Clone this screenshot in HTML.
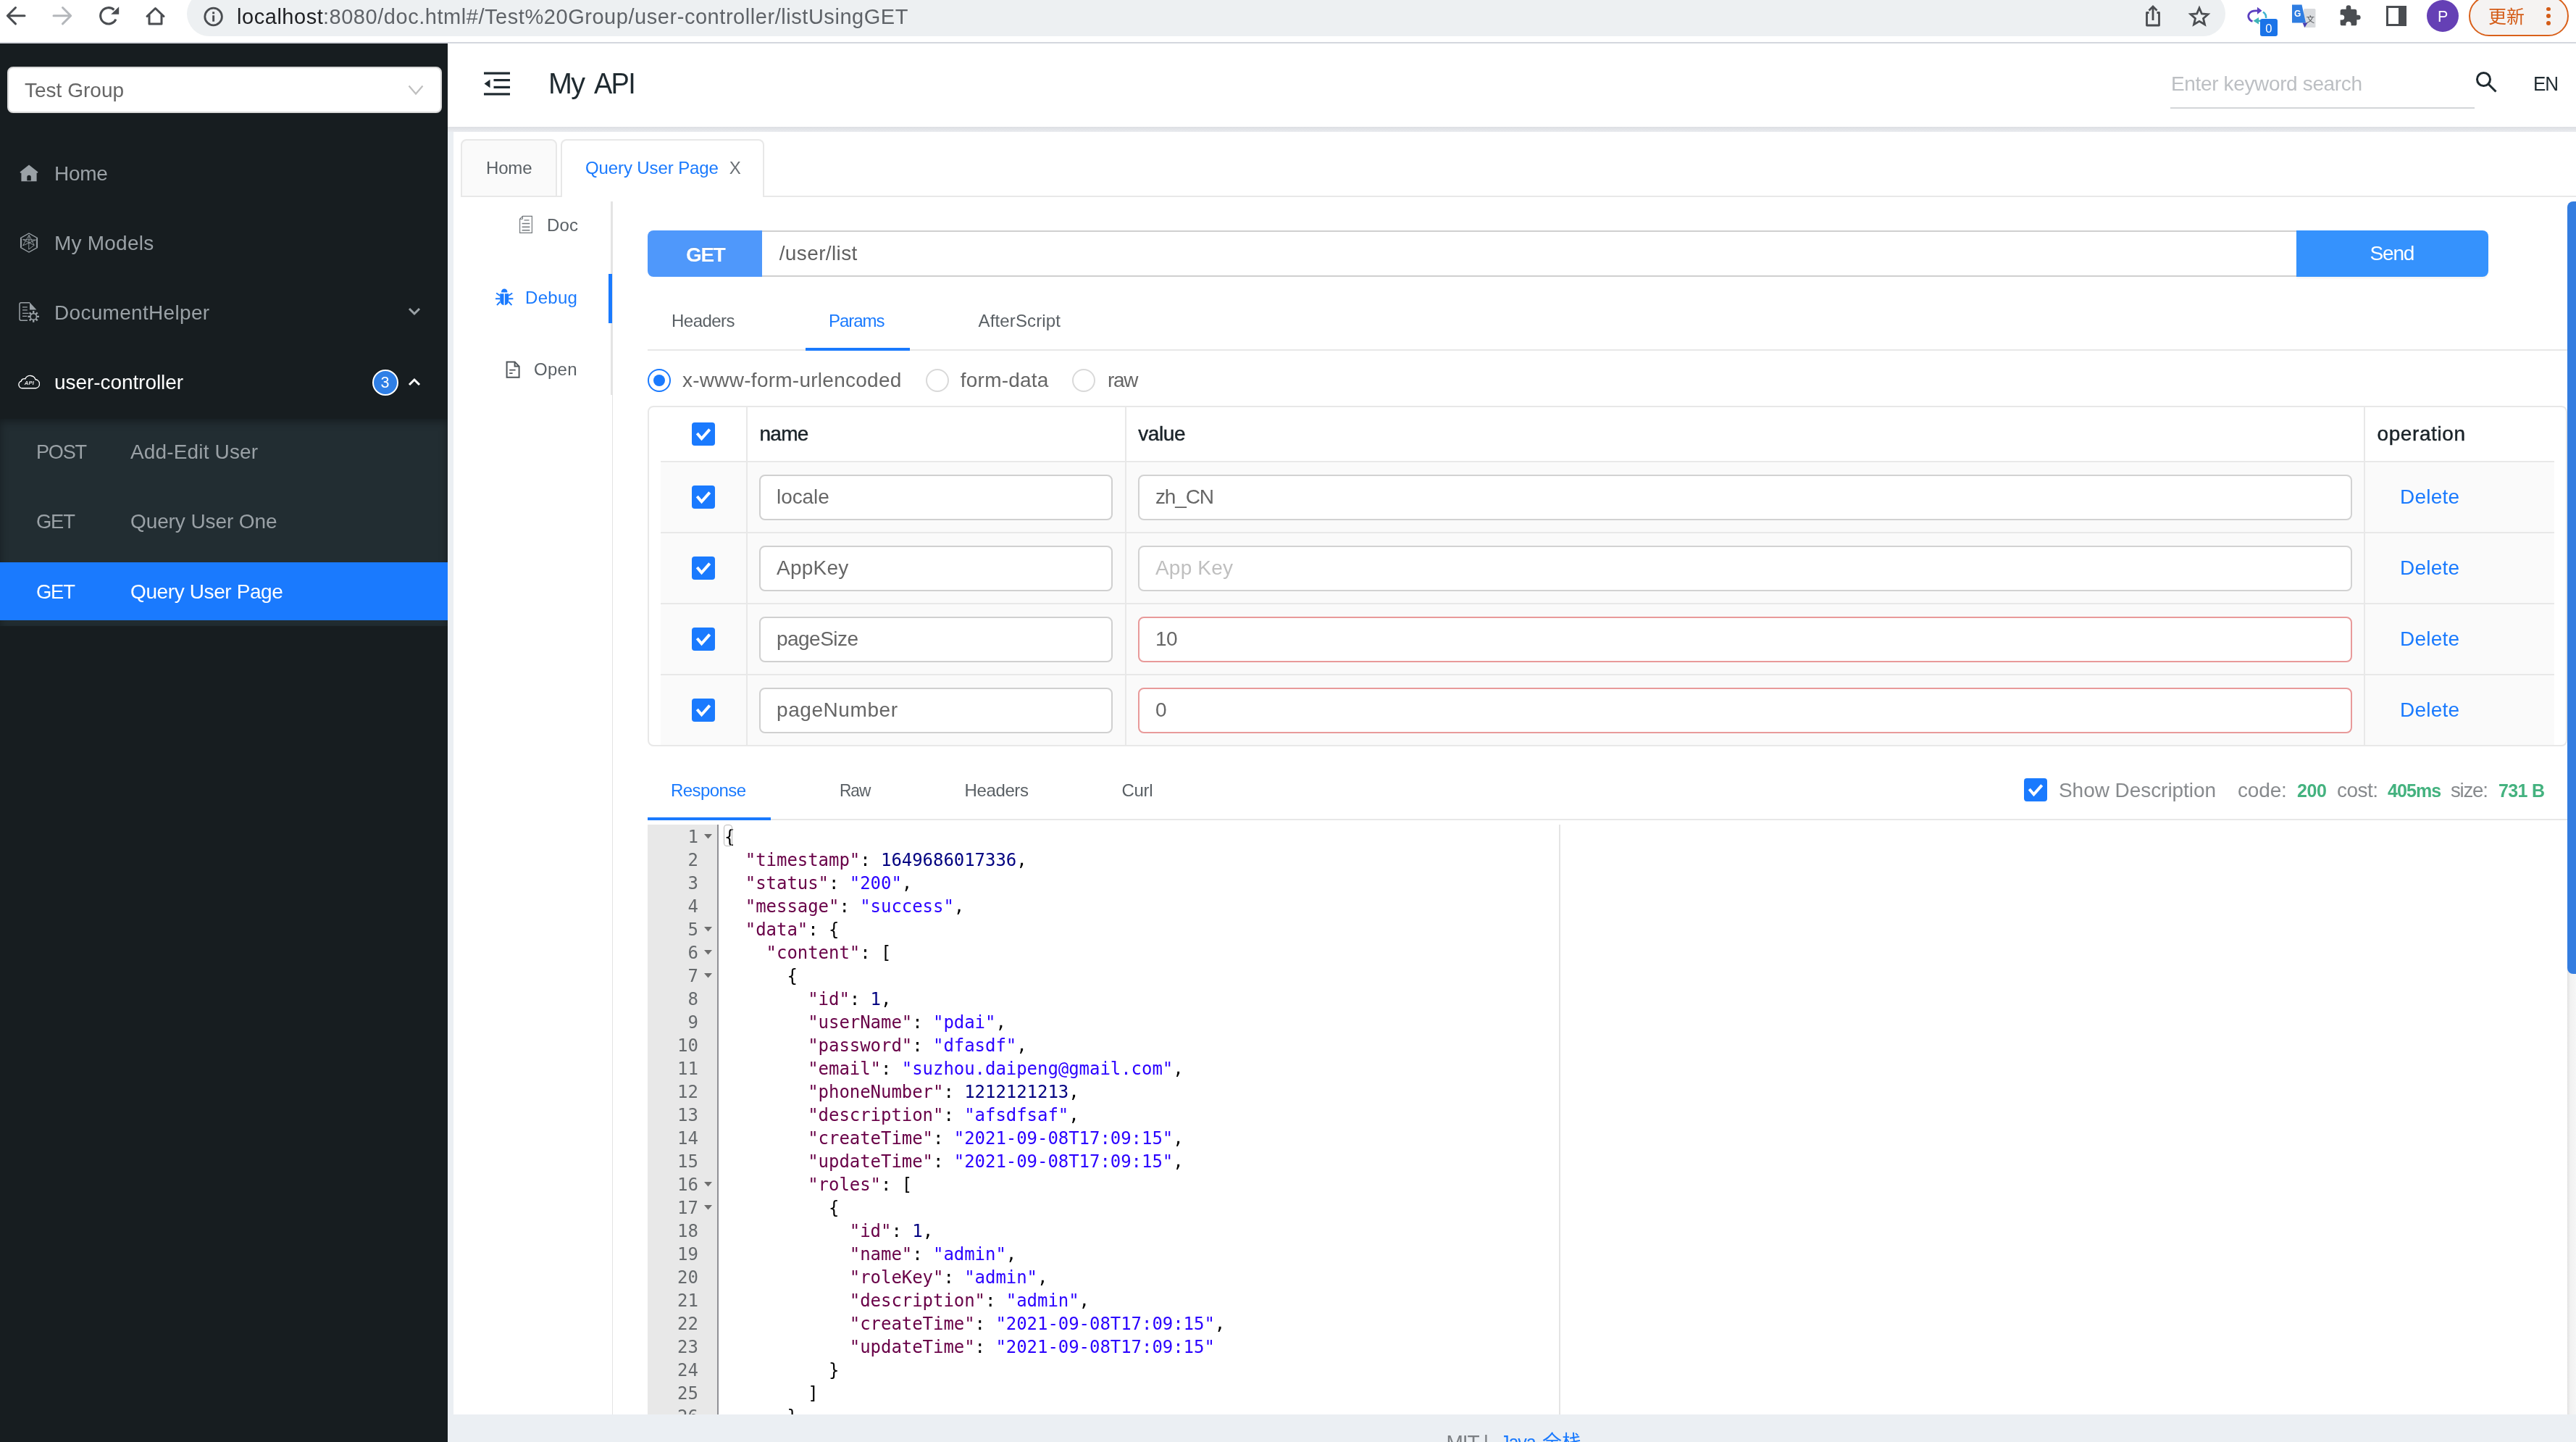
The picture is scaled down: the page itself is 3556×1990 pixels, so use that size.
<!DOCTYPE html>
<html lang="en"><head><meta charset="utf-8"><title>My API</title><style>
html,body{margin:0;padding:0;}
body{width:3556px;height:1990px;overflow:hidden;position:relative;background:#fff;font-family:"Liberation Sans","Noto Sans CJK SC",sans-serif;}
#root{position:absolute;left:0;top:0;width:3556px;height:1990px;overflow:hidden;will-change:transform;}
#root div,#root span.t,#root svg.a,#root .g{position:absolute;}
#root .g{left:0;top:0;width:0;height:0;}
span.t{white-space:pre;}
.code{overflow:hidden;font-family:"DejaVu Sans Mono","Liberation Mono",monospace;font-size:24px;line-height:32px;}
.code .ln{margin-top:1px;left:0;width:70px;height:32px;text-align:right;color:#666a6d;}
.code .cl{height:32px;white-space:pre;letter-spacing:-0.05px;margin-top:1px;}
</style></head><body><div id="root">
<div class="g" id="browser-toolbar">
<div style="left:0px;top:0px;width:3556px;height:59px;background:#fff;"></div>
<div style="left:0px;top:58px;width:3556px;height:2px;background:#d4d7de;"></div>
<div style="left:258px;top:-12px;width:2814px;height:62px;background:#edf0f2;border-radius:31px;"></div>
<svg class="a" style="left:0;top:0" width="260" height="58" viewBox="0 0 260 58" fill="none" stroke-linecap="round" stroke-linejoin="round">
<path d="M34 21.7H11M21.5 10.5L10.3 21.7L21.5 32.9" stroke="#4a4d51" stroke-width="3"/>
<path d="M74 21.7H97M86.5 10.5L97.7 21.7L86.5 32.9" stroke="#b4b7bb" stroke-width="3"/>
<path d="M157.4 13.5A11.2 11.2 0 1 0 160 26.7" stroke="#4a4d51" stroke-width="3.1" stroke-linecap="butt"/>
<path d="M164.2 9.2V19.8H153.2Z" fill="#4a4d51" stroke="none"/>
<path d="M203 22.5L214.5 11.5L226 22.5M206 20.5V33H223V20.5" stroke="#4a4d51" stroke-width="3"/>
</svg>
<svg class="a" style="left:280px;top:8px" width="30" height="30" viewBox="0 0 30 30" fill="none">
<circle cx="14.6" cy="15" r="11.8" stroke="#4a4d51" stroke-width="2.8"/>
<rect x="13.2" y="13.2" width="2.9" height="8.5" fill="#4a4d51"/><rect x="13.2" y="8.3" width="2.9" height="3" fill="#4a4d51"/></svg>
<span class="t" style="left:327.0px;top:4.8px;font-size:29px;line-height:36px;color:#202124;letter-spacing:0.544px;">localhost</span>
<span class="t" style="left:445.9px;top:4.8px;font-size:29px;line-height:36px;color:#5f6368;letter-spacing:0.548px;">:8080/doc.html#/Test%20Group/user-controller/listUsingGET</span>
<svg class="a" style="left:2955px;top:4px" width="100" height="40" viewBox="0 0 100 40" fill="none" stroke="#4a4d51" stroke-width="2.8">
<path d="M11.5 13.5H8.5V31H25.5V13.5H22.5" stroke-linejoin="round"/><path d="M17 24V5.5M11.5 10.5L17 5L22.5 10.5"/>
<path d="M81 7L84.4 15L93 15.7L86.5 21.4L88.5 29.8L81 25.3L73.5 29.8L75.5 21.4L69 15.7L77.6 15Z" stroke-linejoin="miter"/>
</svg>
<svg class="a" style="left:3100px;top:8px" width="48" height="44" viewBox="0 0 48 44" fill="none">
<path d="M9.5 21.5C4 20 2.5 14 5 10.5C7 7.5 10 6.8 14 6.8H17" stroke="#5b3fc0" stroke-width="2.8"/><path d="M16 1.8L22.5 6.8L16 11.8Z" fill="#5b3fc0"/>
<path d="M24 8.5C27 10.5 28.5 13.5 28 17" stroke="#3fb3d0" stroke-width="2.6"/>
<path d="M18 16L10.5 20.8L18 25.5Z" fill="#3fb3b8"/><path d="M17 20.8H22" stroke="#3fb3b8" stroke-width="2.6"/>
<rect x="20" y="18" width="24" height="24" rx="3" fill="#1a73e8"/></svg>
<span class="t" style="left:3127.2px;top:29.3px;font-size:16.5px;line-height:21px;color:#fff;">0</span>
<svg class="a" style="left:3162px;top:4px" width="38" height="36" viewBox="0 0 38 36">
<rect x="18" y="8" width="16.5" height="26" rx="1.5" fill="#d9dbde"/><path d="M2 2.5H15.5L21 27.5H2Z" fill="#2f7de1"/><path d="M16.5 27.5H23.5L19.5 34Z" fill="#4a3fb0"/>
<text x="5" y="18.5" font-family="'Liberation Sans',sans-serif" font-size="12" font-weight="700" fill="#fff">G</text>
<text x="21.5" y="27" font-family="'Liberation Sans','Noto Sans CJK SC',sans-serif" font-size="11.5" fill="#4a4d51">文</text></svg>
<svg class="a" style="left:3228px;top:6px" width="32" height="32" viewBox="0 0 24 24"><path fill="#4a4d51" d="M20.5 11H19V7a2 2 0 0 0-2-2h-4V3.5a2.5 2.5 0 0 0-5 0V5H4a2 2 0 0 0-2 2v3.8h1.5a2.7 2.7 0 0 1 0 5.4H2V20a2 2 0 0 0 2 2h3.8v-1.5a2.7 2.7 0 0 1 5.4 0V22H17a2 2 0 0 0 2-2v-4h1.5a2.5 2.5 0 0 0 0-5z"/></svg>
<div style="left:3294px;top:8px;width:28px;height:28px;border:3px solid #4a4d51;box-sizing:border-box;"></div>
<div style="left:3311px;top:8px;width:11px;height:28px;background:#4a4d51;"></div>
<div style="left:3349.8px;top:0px;width:44px;height:44px;background:#6540b5;border-radius:22px;"></div>
<span class="t" style="left:3365.0px;top:9.8px;font-size:21.5px;line-height:27px;color:#fff;">P</span>
<div style="left:3408px;top:-6px;width:138px;height:56px;border:2px solid #d9601a;border-radius:28px;box-sizing:border-box;background:#f5f3f2;"></div>
<span class="t" style="left:3435.0px;top:7.8px;font-size:25px;line-height:31px;color:#d45c17;font-family:'Liberation Sans','Noto Sans CJK SC',sans-serif;">更新</span>
<div style="left:3515.2px;top:9.7px;width:5.8px;height:5.8px;background:#d45c17;border-radius:3px;"></div>
<div style="left:3515.2px;top:19.3px;width:5.8px;height:5.8px;background:#d45c17;border-radius:3px;"></div>
<div style="left:3515.2px;top:28.900000000000002px;width:5.8px;height:5.8px;background:#d45c17;border-radius:3px;"></div>
</div>
<div style="left:0px;top:60px;width:3556px;height:1930px;background:#ebeff3;"></div>
<aside class="g" id="sidebar">
<div style="left:0px;top:60px;width:618px;height:1930px;background:#171d20;"></div>
<div style="left:10px;top:92px;width:600px;height:64px;background:#fff;border:2px solid #d9d9d9;border-radius:8px;box-sizing:border-box;"></div>
<span class="t" style="left:34.0px;top:107.1px;font-size:28px;line-height:35px;color:#666666;letter-spacing:0.009px;">Test Group</span>
<svg class="a" style="left:560px;top:114px" width="28" height="20" viewBox="0 0 28 20" fill="none"><path d="M4.5 4.5L14 15.5L23.5 4.5" stroke="#bfbfbf" stroke-width="2.2"/></svg>
<span class="t" style="left:75.0px;top:222.3px;font-size:28px;line-height:35px;color:#9aa1a6;letter-spacing:-0.253px;">Home</span>
<span class="t" style="left:75.0px;top:318.3px;font-size:28px;line-height:35px;color:#9aa1a6;letter-spacing:0.220px;">My Models</span>
<span class="t" style="left:75.0px;top:414.3px;font-size:28px;line-height:35px;color:#9aa1a6;letter-spacing:0.308px;">DocumentHelper</span>
<span class="t" style="left:75.0px;top:510.3px;font-size:28px;line-height:35px;color:#fff;letter-spacing:-0.066px;">user-controller</span>
<svg class="a" style="left:26px;top:226px" width="28" height="26" viewBox="0 0 28 26"><path fill="#9aa1a6" fill-rule="evenodd" d="M14 1.6L26.6 11.4L25.3 13L24.6 12.5V24.3H3.4V12.5L2.7 13L1.4 11.4ZM11.3 23.2H16.8V18.6A2.75 2.75 0 0 0 11.3 18.6Z"/></svg>
<svg class="a" style="left:26px;top:320px" width="28" height="30" viewBox="0 0 28 30" fill="none" stroke="#9aa1a6" stroke-width="1.3"><path d="M14 2L25.4 8.5V21.5L14 28L2.6 21.5V8.5Z"/><path d="M3.6 9V21M24.4 9V21" stroke-width="1"/><path d="M14.1 4.4L13.7 24.1M5.6 10.6L23.3 11.1M23.3 11.1L5.6 18.9M5.6 10.6L21.2 18.4M21.2 18.4L13.7 24.1M14.1 4.4L5.6 18.9M14.1 4.4L21.2 18.4" stroke-width="0.9"/></svg>
<svg class="a" style="left:24px;top:416px" width="32" height="30" viewBox="0 0 32 30" fill="none" stroke="#9aa1a6" stroke-width="1.5"><path d="M17 1.8H5.2Q3 1.8 3 4V24Q3 26.2 5.2 26.2H14"/><path d="M17 1.2L26.4 11.6H17Z" fill="#9aa1a6" stroke="none"/><path d="M7 7.9H13.8M7 11.9H13.8M7 16.4H15.5M7 20.4H13.2" stroke-width="1.3"/><circle cx="22.2" cy="20.9" r="5" fill="#9aa1a6" stroke="none"/><path d="M22.2 13.1V28.7M14.4 20.9H30M16.7 15.4L27.7 26.4M27.7 15.4L16.7 26.4" stroke-width="2.4"/><circle cx="22.2" cy="20.9" r="3.5" fill="#171d20" stroke="none"/></svg>
<svg class="a" style="left:25px;top:517px" width="30" height="22" viewBox="0 0 30 22" fill="none" stroke="#fff" stroke-width="1.4"><path d="M6.5 18.7A5 5 0 0 1 4.3 9A4.2 4.2 0 0 1 9.8 5.9A7.6 7.6 0 0 1 24 6.8A6 6 0 0 1 24.5 18.7Z"/></svg>
<span class="t" style="left:33.7px;top:524.1px;font-size:7.6px;line-height:10px;color:#e6e6e6;letter-spacing:0.304px;font-weight:700;font-style:italic;">API</span>
<svg class="a" style="left:562px;top:422px" width="20" height="16" viewBox="0 0 20 16" fill="none"><path d="M3 4L10 11L17 4" stroke="#9aa1a6" stroke-width="3"/></svg>
<svg class="a" style="left:562px;top:519px" width="20" height="16" viewBox="0 0 20 16" fill="none"><path d="M3 12L10 5L17 12" stroke="#fff" stroke-width="3"/></svg>
<div style="left:514px;top:510px;width:36px;height:36px;background:#2f7fe6;border:2px solid #fff;border-radius:18px;box-sizing:border-box;"></div>
<span class="t" style="left:525.4px;top:515.2px;font-size:21.5px;line-height:27px;color:#fff;">3</span>
<div style="left:0px;top:578px;width:618px;height:285.5px;background:#222d32;box-shadow:inset 0 4px 12px rgba(0,0,0,.35);"></div>
<div style="left:0px;top:776px;width:618px;height:80px;background:#1a7afe;"></div>
<span class="t" style="left:50.0px;top:606.3px;font-size:28px;line-height:35px;color:#9aa1a6;letter-spacing:-1.260px;transform:scaleX(0.9671);transform-origin:0.00px 0;">POST</span>
<span class="t" style="left:180.0px;top:606.3px;font-size:28px;line-height:35px;color:#9aa1a6;letter-spacing:0.153px;">Add-Edit User</span>
<span class="t" style="left:50.0px;top:702.3px;font-size:28px;line-height:35px;color:#9aa1a6;letter-spacing:-1.260px;transform:scaleX(0.9790);transform-origin:0.00px 0;">GET</span>
<span class="t" style="left:180.0px;top:702.3px;font-size:28px;line-height:35px;color:#9aa1a6;letter-spacing:-0.103px;">Query User One</span>
<span class="t" style="left:50.0px;top:798.8px;font-size:28px;line-height:35px;color:#fff;letter-spacing:-1.260px;transform:scaleX(0.9790);transform-origin:0.00px 0;">GET</span>
<span class="t" style="left:180.0px;top:798.8px;font-size:28px;line-height:35px;color:#fff;letter-spacing:-0.389px;">Query User Page</span>
</aside>
<header class="g" id="app-header">
<div style="left:618px;top:60px;width:2938px;height:115px;background:#fff;"></div>
<div style="left:618px;top:175px;width:2938px;height:7px;background:linear-gradient(#dddfe3,#e9ebef);"></div>
<svg class="a" style="left:666px;top:97px" width="40" height="38" viewBox="0 0 40 38"><g fill="#1f2a30"><rect x="2" y="2.5" width="36" height="3.2"/><rect x="2" y="31.3" width="36" height="3.2"/><rect x="15.5" y="12" width="22.5" height="3.2"/><rect x="15.5" y="21.8" width="22.5" height="3.2"/><path d="M2.5 18.5L10.5 12.7V24.3Z"/></g></svg>
<span class="t" style="left:757.0px;top:90.2px;font-size:40px;line-height:50px;color:#1f2a30;letter-spacing:-1.800px;transform:scaleX(0.9883);transform-origin:0.00px 0;">My</span>
<span class="t" style="left:820.3px;top:90.2px;font-size:40px;line-height:50px;color:#1f2a30;letter-spacing:-1.800px;transform:scaleX(0.9490);transform-origin:0.00px 0;">API</span>
<span class="t" style="left:2997.0px;top:98.1px;font-size:28px;line-height:35px;color:#bcbfc3;letter-spacing:-0.356px;">Enter keyword search</span>
<div style="left:2996px;top:147.5px;width:420px;height:2px;background:#d3d6d9;"></div>
<svg class="a" style="left:3414px;top:95px" width="36" height="36" viewBox="0 0 36 36" fill="none" stroke="#1f2a30" stroke-width="3"><circle cx="14.5" cy="14.5" r="9"/><path d="M21 21L31.5 31.5"/></svg>
<span class="t" style="left:3497.0px;top:98.3px;font-size:28px;line-height:35px;color:#1f2a30;letter-spacing:-1.260px;transform:scaleX(0.9294);transform-origin:0.00px 0;">EN</span>
</header>
<main class="g" id="content">
<div style="left:626px;top:182px;width:2930px;height:1769.5px;background:#fff;"></div>
<div style="left:636px;top:270px;width:2920px;height:2px;background:#e8e8e8;"></div>
<div style="left:636px;top:192px;width:133px;height:80px;background:#fafafa;border:2px solid #e8e8e8;border-radius:8px 8px 0 0;box-sizing:border-box;"></div>
<div style="left:774px;top:192px;width:281px;height:80px;background:#fff;border:2px solid #e8e8e8;border-bottom:0;border-radius:8px 8px 0 0;box-sizing:border-box;"></div>
<span class="t" style="left:671.0px;top:216.5px;font-size:24px;line-height:30px;color:#5a6065;letter-spacing:-0.160px;">Home</span>
<span class="t" style="left:808.0px;top:216.5px;font-size:24px;line-height:30px;color:#1a7afe;letter-spacing:-0.109px;">Query User Page</span>
<span class="t" style="left:1006.7px;top:216.5px;font-size:24px;line-height:30px;color:#6b7075;">X</span>
<div style="left:843px;top:278px;width:3px;height:267px;background:#e4e4e4;"></div>
<div style="left:844.5px;top:545px;width:1.5px;height:1407px;background:#e4e4e4;"></div>
<div style="left:840px;top:378px;width:4.5px;height:68px;background:#1a7afe;"></div>
<span class="t" style="left:755.0px;top:296.2px;font-size:24px;line-height:30px;color:#5a6065;letter-spacing:0.140px;">Doc</span>
<span class="t" style="left:725.0px;top:396.2px;font-size:24px;line-height:30px;color:#1a7afe;letter-spacing:0.300px;">Debug</span>
<span class="t" style="left:737.0px;top:495.2px;font-size:24px;line-height:30px;color:#5a6065;letter-spacing:0.267px;">Open</span>
<svg class="a" style="left:716px;top:297px" width="20" height="26" viewBox="0 0 20 26" fill="none" stroke="#74797d" stroke-width="1.2"><path d="M5.5 1.4H18.4V24.4H1.6V5.3Z"/><path d="M5.5 1.4V5.3H1.6" stroke-width="1"/><path d="M7.5 6.9H14.5M4.6 11.5H15.4M4.6 16.2H15.4M4.6 20.7H15.4" stroke-width="1.4"/></svg>
<svg class="a" style="left:683px;top:397px" width="27" height="27" viewBox="0 0 27 27"><g fill="#1a7afe"><path d="M9 5.8A4.2 4.2 0 0 1 17.4 5.8V6.6H9Z"/><path d="M7.2 8.2H12.5V24.2A6 7 0 0 1 7.2 18Z"/><path d="M13.9 8.2H19.2V18A6 7 0 0 1 13.9 24.2Z"/></g><g stroke="#1a7afe" stroke-width="1.9" fill="none"><path d="M7.2 11L2.2 7.5M7.2 15.2H1M7.2 19.5L3 24.2M19.2 11L24.2 7.5M19.2 15.2H25.4M19.2 19.5L23.4 24.2"/></g></svg>
<svg class="a" style="left:697px;top:497px" width="24" height="28" viewBox="0 0 24 28" fill="none" stroke="#50565b" stroke-width="2"><path d="M2.6 2.4H13.6L19.6 8.6V23.8H2.6Z"/><path d="M13.6 2.4V8.6H19.6"/><path d="M6.2 13.6H14.6M6.2 18.2H10.6" stroke-width="1.8"/></svg>
<div style="left:1050px;top:318px;width:2121px;height:64px;background:#fff;border:2px solid #cfcfcf;border-right:0;box-sizing:border-box;"></div>
<div style="left:894px;top:318px;width:158px;height:64px;background:#4f98fb;border-radius:8px 0 0 8px;"></div>
<div style="left:3170px;top:318px;width:265px;height:64px;background:#3592fd;border-radius:0 8px 8px 0;box-shadow:0 3px 2px rgba(0,0,0,.04);"></div>
<span class="t" style="left:946.5px;top:334.1px;font-size:28px;line-height:35px;color:#fff;letter-spacing:-1.260px;transform:scaleX(0.9971);transform-origin:0.00px 0;font-weight:700;text-shadow:0 -1px 0 rgba(0,0,0,.12);">GET</span>
<span class="t" style="left:1075.7px;top:331.9px;font-size:28px;line-height:35px;color:#606060;letter-spacing:0.384px;">/user/list</span>
<span class="t" style="left:3271.5px;top:331.9px;font-size:28px;line-height:35px;color:#fff;letter-spacing:-1.173px;">Send</span>
<div style="left:894px;top:481.6px;width:2650px;height:2px;background:#e8e8e8;"></div>
<div style="left:1112px;top:479.8px;width:144px;height:4.2px;background:#1a7afe;"></div>
<span class="t" style="left:927.0px;top:427.9px;font-size:24px;line-height:30px;color:#5a6065;letter-spacing:-0.520px;">Headers</span>
<span class="t" style="left:1144.0px;top:427.9px;font-size:24px;line-height:30px;color:#1a7afe;letter-spacing:-1.060px;">Params</span>
<span class="t" style="left:1350.5px;top:427.9px;font-size:24px;line-height:30px;color:#5a6065;letter-spacing:0.142px;">AfterScript</span>
<div style="left:894px;top:509px;width:32px;height:32px;border:2px solid #1a7afe;border-radius:16px;box-sizing:border-box;background:#fff;"></div>
<div style="left:902px;top:517px;width:16px;height:16px;background:#1a7afe;border-radius:8px;"></div>
<div style="left:1277.5px;top:509px;width:32px;height:32px;border:2px solid #d9d9d9;border-radius:16px;box-sizing:border-box;background:#fff;"></div>
<div style="left:1480px;top:509px;width:32px;height:32px;border:2px solid #d9d9d9;border-radius:16px;box-sizing:border-box;background:#fff;"></div>
<span class="t" style="left:942.0px;top:506.9px;font-size:28px;line-height:35px;color:#666666;letter-spacing:0.256px;">x-www-form-urlencoded</span>
<span class="t" style="left:1325.8px;top:506.9px;font-size:28px;line-height:35px;color:#666666;letter-spacing:0.220px;">form-data</span>
<span class="t" style="left:1529.0px;top:506.9px;font-size:28px;line-height:35px;color:#666666;letter-spacing:-1.260px;transform:scaleX(0.9967);transform-origin:0.00px 0;">raw</span>
<div style="left:894px;top:560px;width:2650px;height:469.5px;border:2px solid #e8e8e8;border-right:2px solid #e8e8e8;border-radius:8px;box-sizing:border-box;"></div>
<div style="left:912px;top:638px;width:2614px;height:390px;background:#fafafa;"></div>
<div style="left:912px;top:636px;width:2614px;height:2px;background:#e8e8e8;"></div>
<div style="left:912px;top:734px;width:2614px;height:2px;background:#e8e8e8;"></div>
<div style="left:912px;top:832px;width:2614px;height:2px;background:#e8e8e8;"></div>
<div style="left:912px;top:930px;width:2614px;height:2px;background:#e8e8e8;"></div>
<div style="left:1030px;top:562px;width:2px;height:466px;background:#e8e8e8;"></div>
<div style="left:1553px;top:562px;width:2px;height:466px;background:#e8e8e8;"></div>
<div style="left:3263px;top:562px;width:2px;height:466px;background:#e8e8e8;"></div>
<div style="left:955px;top:583px;width:32px;height:32px;background:#1a7afe;border-radius:4px;"><svg width="32" height="32" viewBox="0 0 32 32" fill="none"><path d="M7.3 15L13.5 22.3L24.7 9.6" stroke="#fff" stroke-width="4"/></svg></div>
<span class="t" style="left:1048.5px;top:580.8px;font-size:28px;line-height:35px;color:#1a2329;letter-spacing:-0.700px;-webkit-text-stroke:0.45px #1a2329;">name</span>
<span class="t" style="left:1571.3px;top:580.8px;font-size:28px;line-height:35px;color:#1a2329;letter-spacing:-0.430px;-webkit-text-stroke:0.45px #1a2329;">value</span>
<span class="t" style="left:3281.5px;top:580.8px;font-size:28px;line-height:35px;color:#1a2329;letter-spacing:0.592px;-webkit-text-stroke:0.45px #1a2329;">operation</span>
<div style="left:955px;top:669.6px;width:32px;height:32px;background:#1a7afe;border-radius:4px;"><svg width="32" height="32" viewBox="0 0 32 32" fill="none"><path d="M7.3 15L13.5 22.3L24.7 9.6" stroke="#fff" stroke-width="4"/></svg></div>
<div style="left:1048.3px;top:654.6px;width:488px;height:63px;background:#fff;border:2px solid #d0d0d0;border-radius:8px;box-sizing:border-box;"></div>
<div style="left:1571.3px;top:654.6px;width:1675.4px;height:63px;background:#fff;border:2px solid #d2d2d2;border-radius:8px;box-sizing:border-box;"></div>
<span class="t" style="left:1072.0px;top:667.8px;font-size:28px;line-height:35px;color:#666666;letter-spacing:-0.076px;">locale</span>
<span class="t" style="left:1595.0px;top:667.8px;font-size:28px;line-height:35px;color:#666666;letter-spacing:-1.170px;">zh_CN</span>
<span class="t" style="left:3313.0px;top:667.8px;font-size:28px;line-height:35px;color:#1a7afe;letter-spacing:0.216px;">Delete</span>
<div style="left:955px;top:767.6px;width:32px;height:32px;background:#1a7afe;border-radius:4px;"><svg width="32" height="32" viewBox="0 0 32 32" fill="none"><path d="M7.3 15L13.5 22.3L24.7 9.6" stroke="#fff" stroke-width="4"/></svg></div>
<div style="left:1048.3px;top:752.6px;width:488px;height:63px;background:#fff;border:2px solid #d0d0d0;border-radius:8px;box-sizing:border-box;"></div>
<div style="left:1571.3px;top:752.6px;width:1675.4px;height:63px;background:#fff;border:2px solid #d2d2d2;border-radius:8px;box-sizing:border-box;"></div>
<span class="t" style="left:1072.0px;top:765.8px;font-size:28px;line-height:35px;color:#666666;letter-spacing:0.260px;">AppKey</span>
<span class="t" style="left:1595.0px;top:765.8px;font-size:28px;line-height:35px;color:#bfbfbf;letter-spacing:0.193px;">App Key</span>
<span class="t" style="left:3313.0px;top:765.8px;font-size:28px;line-height:35px;color:#1a7afe;letter-spacing:0.216px;">Delete</span>
<div style="left:955px;top:865.6px;width:32px;height:32px;background:#1a7afe;border-radius:4px;"><svg width="32" height="32" viewBox="0 0 32 32" fill="none"><path d="M7.3 15L13.5 22.3L24.7 9.6" stroke="#fff" stroke-width="4"/></svg></div>
<div style="left:1048.3px;top:850.6px;width:488px;height:63px;background:#fff;border:2px solid #d0d0d0;border-radius:8px;box-sizing:border-box;"></div>
<div style="left:1571.3px;top:850.6px;width:1675.4px;height:63px;background:#fff;border:2px solid #e89a9a;border-radius:8px;box-sizing:border-box;"></div>
<span class="t" style="left:1072.0px;top:863.8px;font-size:28px;line-height:35px;color:#666666;letter-spacing:-0.537px;">pageSize</span>
<span class="t" style="left:1595.0px;top:863.8px;font-size:28px;line-height:35px;color:#666666;letter-spacing:-0.580px;">10</span>
<span class="t" style="left:3313.0px;top:863.8px;font-size:28px;line-height:35px;color:#1a7afe;letter-spacing:0.216px;">Delete</span>
<div style="left:955px;top:963.6px;width:32px;height:32px;background:#1a7afe;border-radius:4px;"><svg width="32" height="32" viewBox="0 0 32 32" fill="none"><path d="M7.3 15L13.5 22.3L24.7 9.6" stroke="#fff" stroke-width="4"/></svg></div>
<div style="left:1048.3px;top:948.6px;width:488px;height:63px;background:#fff;border:2px solid #d0d0d0;border-radius:8px;box-sizing:border-box;"></div>
<div style="left:1571.3px;top:948.6px;width:1675.4px;height:63px;background:#fff;border:2px solid #e89a9a;border-radius:8px;box-sizing:border-box;"></div>
<span class="t" style="left:1072.0px;top:961.8px;font-size:28px;line-height:35px;color:#666666;letter-spacing:0.573px;">pageNumber</span>
<span class="t" style="left:1595.0px;top:961.8px;font-size:28px;line-height:35px;color:#666666;">0</span>
<span class="t" style="left:3313.0px;top:961.8px;font-size:28px;line-height:35px;color:#1a7afe;letter-spacing:0.216px;">Delete</span>
<div style="left:894px;top:1130px;width:2650px;height:2px;background:#e8e8e8;"></div>
<div style="left:894px;top:1127.8px;width:170px;height:4.2px;background:#1a7afe;"></div>
<span class="t" style="left:926.0px;top:1075.8px;font-size:24px;line-height:30px;color:#1a7afe;letter-spacing:-0.571px;">Response</span>
<span class="t" style="left:1159.0px;top:1075.8px;font-size:24px;line-height:30px;color:#5a6065;letter-spacing:-1.080px;transform:scaleX(0.9440);transform-origin:0.00px 0;">Raw</span>
<span class="t" style="left:1331.5px;top:1075.8px;font-size:24px;line-height:30px;color:#5a6065;letter-spacing:-0.370px;">Headers</span>
<span class="t" style="left:1548.5px;top:1075.8px;font-size:24px;line-height:30px;color:#5a6065;letter-spacing:-0.307px;">Curl</span>
<div style="left:2794px;top:1074px;width:32px;height:32px;background:#1a7afe;border-radius:4px;"><svg width="32" height="32" viewBox="0 0 32 32" fill="none"><path d="M7.3 15L13.5 22.3L24.7 9.6" stroke="#fff" stroke-width="4"/></svg></div>
<span class="t" style="left:2842.0px;top:1072.8px;font-size:28px;line-height:35px;color:#878a8d;letter-spacing:-0.056px;">Show Description</span>
<span class="t" style="left:3089.0px;top:1072.8px;font-size:28px;line-height:35px;color:#878a8d;letter-spacing:-0.150px;">code:</span>
<span class="t" style="left:3171.0px;top:1075.8px;font-size:25px;line-height:31px;color:#44b27f;letter-spacing:-0.375px;font-weight:700;">200</span>
<span class="t" style="left:3226.0px;top:1072.8px;font-size:28px;line-height:35px;color:#878a8d;letter-spacing:-0.520px;">cost:</span>
<span class="t" style="left:3296.0px;top:1075.8px;font-size:25px;line-height:31px;color:#44b27f;letter-spacing:-0.938px;font-weight:700;">405ms</span>
<span class="t" style="left:3383.0px;top:1072.8px;font-size:28px;line-height:35px;color:#878a8d;letter-spacing:-1.260px;transform:scaleX(0.9878);transform-origin:0.00px 0;">size:</span>
<span class="t" style="left:3449.0px;top:1075.8px;font-size:25px;line-height:31px;color:#44b27f;letter-spacing:-0.688px;font-weight:700;">731 B</span>
<div style="left:3544px;top:1336px;width:12px;height:615.5px;background:linear-gradient(to right,#e2e2e2,#f1f1f1 35%,#f6f6f6);"></div>
<div style="left:3544px;top:278px;width:20px;height:1066px;background:#347de0;border-radius:8px;"></div>
<div style="left:894px;top:1138px;width:96px;height:813.5px;background:#e8e8e8;"></div>
<div style="left:990px;top:1138px;width:2px;height:813.5px;background:#909095;"></div>
<div style="left:2152px;top:1138px;width:2px;height:813.5px;background:#e4e4e4;"></div>
<div class="code" style="left:894px;top:1138px;width:2650px;height:813.5px;">
<div class="ln" style="top:0px">1</div>
<svg class="a" style="left:78px;top:13px" width="11" height="7" viewBox="0 0 11 7"><path d="M0 0H11L5.5 6.5Z" fill="#6e6e6e"/></svg>
<div class="cl" style="top:0px;left:106.00px"><span style="color:#000">{</span></div>
<div class="ln" style="top:32px">2</div>
<div class="cl" style="top:32px;left:134.80px"><span style="color:#680047">&quot;timestamp&quot;</span><span style="color:#000">: </span><span style="color:#000080">1649686017336</span><span style="color:#000">,</span></div>
<div class="ln" style="top:64px">3</div>
<div class="cl" style="top:64px;left:134.80px"><span style="color:#680047">&quot;status&quot;</span><span style="color:#000">: </span><span style="color:#2a00ff">&quot;200&quot;</span><span style="color:#000">,</span></div>
<div class="ln" style="top:96px">4</div>
<div class="cl" style="top:96px;left:134.80px"><span style="color:#680047">&quot;message&quot;</span><span style="color:#000">: </span><span style="color:#2a00ff">&quot;success&quot;</span><span style="color:#000">,</span></div>
<div class="ln" style="top:128px">5</div>
<svg class="a" style="left:78px;top:141px" width="11" height="7" viewBox="0 0 11 7"><path d="M0 0H11L5.5 6.5Z" fill="#6e6e6e"/></svg>
<div class="cl" style="top:128px;left:134.80px"><span style="color:#680047">&quot;data&quot;</span><span style="color:#000">: {</span></div>
<div class="ln" style="top:160px">6</div>
<svg class="a" style="left:78px;top:173px" width="11" height="7" viewBox="0 0 11 7"><path d="M0 0H11L5.5 6.5Z" fill="#6e6e6e"/></svg>
<div class="cl" style="top:160px;left:163.60px"><span style="color:#680047">&quot;content&quot;</span><span style="color:#000">: [</span></div>
<div class="ln" style="top:192px">7</div>
<svg class="a" style="left:78px;top:205px" width="11" height="7" viewBox="0 0 11 7"><path d="M0 0H11L5.5 6.5Z" fill="#6e6e6e"/></svg>
<div class="cl" style="top:192px;left:192.40px"><span style="color:#000">{</span></div>
<div class="ln" style="top:224px">8</div>
<div class="cl" style="top:224px;left:221.20px"><span style="color:#680047">&quot;id&quot;</span><span style="color:#000">: </span><span style="color:#000080">1</span><span style="color:#000">,</span></div>
<div class="ln" style="top:256px">9</div>
<div class="cl" style="top:256px;left:221.20px"><span style="color:#680047">&quot;userName&quot;</span><span style="color:#000">: </span><span style="color:#2a00ff">&quot;pdai&quot;</span><span style="color:#000">,</span></div>
<div class="ln" style="top:288px">10</div>
<div class="cl" style="top:288px;left:221.20px"><span style="color:#680047">&quot;password&quot;</span><span style="color:#000">: </span><span style="color:#2a00ff">&quot;dfasdf&quot;</span><span style="color:#000">,</span></div>
<div class="ln" style="top:320px">11</div>
<div class="cl" style="top:320px;left:221.20px"><span style="color:#680047">&quot;email&quot;</span><span style="color:#000">: </span><span style="color:#2a00ff">&quot;suzhou.daipeng@gmail.com&quot;</span><span style="color:#000">,</span></div>
<div class="ln" style="top:352px">12</div>
<div class="cl" style="top:352px;left:221.20px"><span style="color:#680047">&quot;phoneNumber&quot;</span><span style="color:#000">: </span><span style="color:#000080">1212121213</span><span style="color:#000">,</span></div>
<div class="ln" style="top:384px">13</div>
<div class="cl" style="top:384px;left:221.20px"><span style="color:#680047">&quot;description&quot;</span><span style="color:#000">: </span><span style="color:#2a00ff">&quot;afsdfsaf&quot;</span><span style="color:#000">,</span></div>
<div class="ln" style="top:416px">14</div>
<div class="cl" style="top:416px;left:221.20px"><span style="color:#680047">&quot;createTime&quot;</span><span style="color:#000">: </span><span style="color:#2a00ff">&quot;2021-09-08T17:09:15&quot;</span><span style="color:#000">,</span></div>
<div class="ln" style="top:448px">15</div>
<div class="cl" style="top:448px;left:221.20px"><span style="color:#680047">&quot;updateTime&quot;</span><span style="color:#000">: </span><span style="color:#2a00ff">&quot;2021-09-08T17:09:15&quot;</span><span style="color:#000">,</span></div>
<div class="ln" style="top:480px">16</div>
<svg class="a" style="left:78px;top:493px" width="11" height="7" viewBox="0 0 11 7"><path d="M0 0H11L5.5 6.5Z" fill="#6e6e6e"/></svg>
<div class="cl" style="top:480px;left:221.20px"><span style="color:#680047">&quot;roles&quot;</span><span style="color:#000">: [</span></div>
<div class="ln" style="top:512px">17</div>
<svg class="a" style="left:78px;top:525px" width="11" height="7" viewBox="0 0 11 7"><path d="M0 0H11L5.5 6.5Z" fill="#6e6e6e"/></svg>
<div class="cl" style="top:512px;left:250.00px"><span style="color:#000">{</span></div>
<div class="ln" style="top:544px">18</div>
<div class="cl" style="top:544px;left:278.80px"><span style="color:#680047">&quot;id&quot;</span><span style="color:#000">: </span><span style="color:#000080">1</span><span style="color:#000">,</span></div>
<div class="ln" style="top:576px">19</div>
<div class="cl" style="top:576px;left:278.80px"><span style="color:#680047">&quot;name&quot;</span><span style="color:#000">: </span><span style="color:#2a00ff">&quot;admin&quot;</span><span style="color:#000">,</span></div>
<div class="ln" style="top:608px">20</div>
<div class="cl" style="top:608px;left:278.80px"><span style="color:#680047">&quot;roleKey&quot;</span><span style="color:#000">: </span><span style="color:#2a00ff">&quot;admin&quot;</span><span style="color:#000">,</span></div>
<div class="ln" style="top:640px">21</div>
<div class="cl" style="top:640px;left:278.80px"><span style="color:#680047">&quot;description&quot;</span><span style="color:#000">: </span><span style="color:#2a00ff">&quot;admin&quot;</span><span style="color:#000">,</span></div>
<div class="ln" style="top:672px">22</div>
<div class="cl" style="top:672px;left:278.80px"><span style="color:#680047">&quot;createTime&quot;</span><span style="color:#000">: </span><span style="color:#2a00ff">&quot;2021-09-08T17:09:15&quot;</span><span style="color:#000">,</span></div>
<div class="ln" style="top:704px">23</div>
<div class="cl" style="top:704px;left:278.80px"><span style="color:#680047">&quot;updateTime&quot;</span><span style="color:#000">: </span><span style="color:#2a00ff">&quot;2021-09-08T17:09:15&quot;</span></div>
<div class="ln" style="top:736px">24</div>
<div class="cl" style="top:736px;left:250.00px"><span style="color:#000">}</span></div>
<div class="ln" style="top:768px">25</div>
<div class="cl" style="top:768px;left:221.20px"><span style="color:#000">]</span></div>
<div class="ln" style="top:800px">26</div>
<div class="cl" style="top:800px;left:192.40px"><span style="color:#000">}</span></div>
</div>
<div style="left:999px;top:1138px;width:12px;height:30px;border:1.5px solid #b9b9b9;border-radius:4px;box-sizing:border-box;"></div>
</main>
<footer class="g" id="app-footer">
<div style="left:618px;top:1951.5px;width:2938px;height:40px;background:#ebeff3;"></div>
<span class="t" style="left:1996.6px;top:1973.3px;font-size:28px;line-height:35px;color:#7b7f83;letter-spacing:-1.080px;">MIT |</span>
<span class="t" style="left:2071.0px;top:1973.3px;font-size:28px;line-height:35px;color:#1a7afe;letter-spacing:-1.260px;transform:scaleX(0.8996);transform-origin:0.00px 0;">Java</span>
<span class="t" style="left:2129.0px;top:1974.1px;font-size:27px;line-height:34px;color:#1a7afe;font-family:'Liberation Sans','Noto Sans CJK SC',sans-serif;">全栈</span>
</footer>
</div></body></html>
